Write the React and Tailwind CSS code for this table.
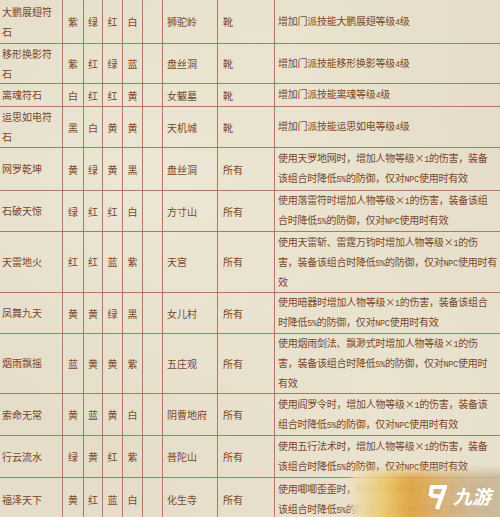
import React from "react";

const rows = [
  { h: "h-[44px]", name: ["大鹏展翅符", "石"], c: ["紫", "绿", "红", "白"], sect: "狮驼岭", part: "靴", desc: ["增加门派技能大鹏展翅等级4级"] },
  { h: "h-[40px]", name: ["移形换影符", "石"], c: ["紫", "红", "绿", "蓝"], sect: "盘丝洞", part: "靴", desc: ["增加门派技能移形换影等级4级"] },
  { h: "h-[23px]", name: ["离魂符石"], c: ["白", "红", "红", "黄"], sect: "女魃墓", part: "靴", desc: ["增加门派技能离魂等级4级"] },
  { h: "h-[41px]", name: ["运思如电符", "石"], c: ["黑", "白", "黄", "黄"], sect: "天机城", part: "靴", desc: ["增加门派技能运思如电等级4级"] },
  { h: "h-[43px]", name: ["网罗乾坤"], c: ["黄", "绿", "黄", "黑"], sect: "盘丝洞", part: "所有", desc: ["使用天罗地网时，增加人物等级×1的伤害，装备", "该组合时降低5%的防御，仅对NPC使用时有效"] },
  { h: "h-[40px]", name: ["石破天惊"], c: ["绿", "红", "红", "白"], sect: "方寸山", part: "所有", desc: ["使用落雷符时增加人物等级×1的伤害，装备该组", "合时降低5%的防御，仅对NPC使用时有效"] },
  { h: "h-[62px]", name: ["天雷地火"], c: ["红", "红", "蓝", "紫"], sect: "天宫", part: "所有", desc: ["使用天雷斩、雷霆万钧时增加人物等级×1的伤", "害，装备该组合时降低5%的防御，仅对NPC使用时有", "效"] },
  { h: "h-[40px]", name: ["凤舞九天"], c: ["黄", "黄", "绿", "黑"], sect: "女儿村", part: "所有", desc: ["使用暗器时增加人物等级×1的伤害，装备该组合", "时降低5%的防御，仅对NPC使用时有效"] },
  { h: "h-[61px]", name: ["烟雨飘摇"], c: ["蓝", "黄", "黄", "紫"], sect: "五庄观", part: "所有", desc: ["使用烟雨剑法、飘渺式时增加人物等级×1的伤", "害，装备该组合时降低5%的防御，仅对NPC使用时", "有效"] },
  { h: "h-[42px]", name: ["索命无常"], c: ["黄", "蓝", "黄", "白"], sect: "阴曹地府", part: "所有", desc: ["使用阎罗令时，增加人物等级×1的伤害，装备该", "组合时降低5%的防御，仅对NPC使用时有效"] },
  { h: "h-[42px]", name: ["行云流水"], c: ["绿", "黄", "红", "紫"], sect: "普陀山", part: "所有", desc: ["使用五行法术时，增加人物等级×1的伤害，装备", "该组合时降低5%的防御，仅对NPC使用时有效"] },
  { h: "h-[44px]", name: ["福泽天下"], c: ["黄", "红", "蓝", "白"], sect: "化生寺", part: "所有", desc: ["使用唧唧歪歪时，增加人物等级×1的伤害，装备", "该组合时降低5%的防御，仅对NPC使用时有效"] },
];

const cell = "border-r border-b border-[#ab7a60] flex items-center overflow-hidden";

// ASCII runs get half-width metrics like the bitmap font in the original
function Mixed({ text }) {
  const parts = text.split(/([0-9A-Za-z%]+)/);
  return (
    <>
      {parts.map((p, i) =>
        /^[0-9A-Za-z%]+$/.test(p) ? (
          <span key={i} className="font-['Liberation_Mono',monospace] text-[8.4px]">
            {p}
          </span>
        ) : (
          <span key={i}>{p}</span>
        )
      )}
    </>
  );
}

function Row({ r }) {
  return (
    <div className={`grid grid-cols-[63px_21px_19px_20px_20px_20px_55px_57px_1fr] ${r.h}`}>
      <div className={`${cell} pl-[2px] leading-[20px]`}>
        <div className="flex flex-col whitespace-nowrap">
          {r.name.map((n, i) => (
            <span key={i}>{n}</span>
          ))}
        </div>
      </div>
      {r.c.map((c, i) => (
        <div key={i} className={`${cell} justify-center`}>
          {c}
        </div>
      ))}
      <div className={cell}></div>
      <div className={`${cell} pl-[4px] whitespace-nowrap`}>{r.sect}</div>
      <div className={`${cell} pl-[5px] whitespace-nowrap`}>{r.part}</div>
      <div className="border-b border-[#ab7a60] flex items-center pl-[3px]">
        <div className="flex flex-col leading-[18px] whitespace-nowrap tracking-[-0.25px]">
          {r.desc.map((d, i) => (
            <div key={i}>
              <Mixed text={d} />
            </div>
          ))}
        </div>
      </div>
    </div>
  );
}

export default function App() {
  return (
    <div
      className="relative w-[500px] h-[517px] overflow-hidden bg-[#e5ddca] bg-[radial-gradient(ellipse_at_30%_35%,#ece6d4_0%,transparent_55%),radial-gradient(ellipse_at_75%_75%,#eae3d0_0%,transparent_50%),radial-gradient(ellipse_at_60%_10%,#e9e2cd_0%,transparent_45%)] text-[10px] text-[#784829]"
      style={{ fontFamily: '"Noto Sans CJK SC", "Noto Sans", sans-serif' }}
    >
      <div className="flex flex-col w-[520px]">
        {rows.map((r, i) => (
          <Row key={i} r={r} />
        ))}
      </div>

      {/* watermark */}
      <div className="absolute left-[352px] top-[472px] w-[170px] h-[60px]">
        <div className="absolute inset-0 rounded-lg blur-[4px] bg-[linear-gradient(90deg,#efe2c2_0%,#ecc76a_20%,#e0a43f_34%,#d9b175_52%,#cdb895_72%,#c4b69c_100%)] opacity-95"></div>
        <svg
          className="absolute left-[75px] top-[12px]"
          width="20"
          height="26"
          viewBox="0 0 20 26"
        >
          <path
            d="M3.5 12 L5 3 L18 3 L10 25 M3.5 11.5 L13 12.5"
            fill="none"
            stroke="#ffffff"
            strokeWidth="4.2"
            strokeLinejoin="miter"
          />
        </svg>
        <div className="absolute left-[101px] top-[13px] text-[19px] leading-[22px] italic font-bold text-white whitespace-nowrap">
          九游
        </div>
      </div>
    </div>
  );
}
